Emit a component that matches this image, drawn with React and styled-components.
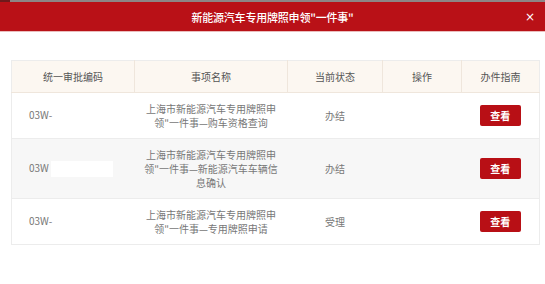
import styled, { createGlobalStyle } from 'styled-components';

const GlobalStyle = createGlobalStyle`
  html, body {
    margin: 0;
    padding: 0;
    background: #fff;
  }
  body {
    font-family: "Noto Sans CJK SC", "Noto Sans", sans-serif;
  }
`;

const rows = [
  { code: '03W-', name: '上海市新能源汽车专用牌照申领"一件事—购车资格查询', status: '办结' },
  { code: '03W', name: '上海市新能源汽车专用牌照申领"一件事—新能源汽车车辆信息确认', status: '办结' },
  { code: '03W-', name: '上海市新能源汽车专用牌照申领"一件事—专用牌照申请', status: '受理' },
];

function App() {
  return (
    <>
      <GlobalStyle />
      <Modal>
        <TopStrip>
          <span className="edge" />
        </TopStrip>
        <TitleBar>
          <h1>新能源汽车专用牌照申领"一件事"</h1>
          <Close aria-label="关闭">×</Close>
        </TitleBar>
        <Body>
          <Table>
            <thead>
              <tr>
                <Th $w={122}>统一审批编码</Th>
                <Th $w={152}>事项名称</Th>
                <Th $w={94}>当前状态</Th>
                <Th $w={78}>操作</Th>
                <Th $w={77}>办件指南</Th>
              </tr>
            </thead>
            <tbody>
              {rows.map((r, i) => (
                <Row key={i} $alt={i % 2 === 1}>
                  <CodeCell>
                    {r.code}
                    <Redact />
                  </CodeCell>
                  <NameCell>{r.name}</NameCell>
                  <Td>{r.status}</Td>
                  <Td />
                  <Td>
                    <ViewButton>查看</ViewButton>
                  </Td>
                </Row>
              ))}
            </tbody>
          </Table>
        </Body>
      </Modal>
    </>
  );
}

export default App;

const Modal = styled.div`
  width: 545px;
  height: 284px;
  background: #fff;
  display: flex;
  flex-direction: column;
`;

const TopStrip = styled.div`
  height: 2px;
  background: #8d8686;
  display: flex;

  .edge {
    width: 10px;
    background: #6e1a1c;
  }
`;

const TitleBar = styled.div`
  height: 29px;
  background: #b91117;
  border-bottom: 1px solid #eabdbd;
  display: flex;
  align-items: center;
  justify-content: center;
  position: relative;

  h1 {
    margin: 0;
    color: #fff;
    font-size: 11px;
    font-weight: 500;
    letter-spacing: -0.2px;
  }
`;

const Close = styled.span`
  position: absolute;
  right: 10px;
  top: 8px;
  color: #fff;
  font-family: "DejaVu Sans", sans-serif;
  font-size: 12px;
  line-height: 14px;
`;

const Body = styled.div`
  padding: 28px 11px 0;
`;

const Table = styled.table`
  width: 523px;
  border-collapse: collapse;
  table-layout: fixed;
  border: 1px solid #ececec;
  font-size: 10px;
  color: #777;
`;

const Th = styled.th`
  width: ${(p) => p.$w}px;
  height: 31px;
  padding: 0;
  background: #fcf7f1;
  border-right: 1px solid #efe6dc;
  border-bottom: 1px solid #efe6dc;
  color: #555;
  font-weight: 400;
  font-size: 10px;

  &:last-child {
    border-right: none;
  }
`;

const Row = styled.tr`
  background: ${(p) => (p.$alt ? '#f7f7f7' : '#fff')};
  border-bottom: 1px solid #ececec;
`;

const Td = styled.td`
  padding: 0;
  text-align: center;
  vertical-align: middle;
`;

const CodeCell = styled(Td)`
  text-align: left;
  padding-left: 17px;
  white-space: nowrap;
`;

const Redact = styled.span`
  display: inline-block;
  width: 62px;
  height: 16px;
  margin-left: 2px;
  vertical-align: middle;
  background: #fff;
`;

const NameCell = styled(Td)`
  padding: 9px 8px 8px;
  line-height: 14px;
  height: 28px;
`;

const ViewButton = styled.button`
  width: 41px;
  height: 21px;
  padding: 0;
  border: none;
  border-radius: 2px;
  background: #b80f15;
  color: #fff;
  font-family: "Noto Sans CJK SC", sans-serif;
  font-size: 10px;
  font-weight: 700;
  cursor: pointer;
`;
